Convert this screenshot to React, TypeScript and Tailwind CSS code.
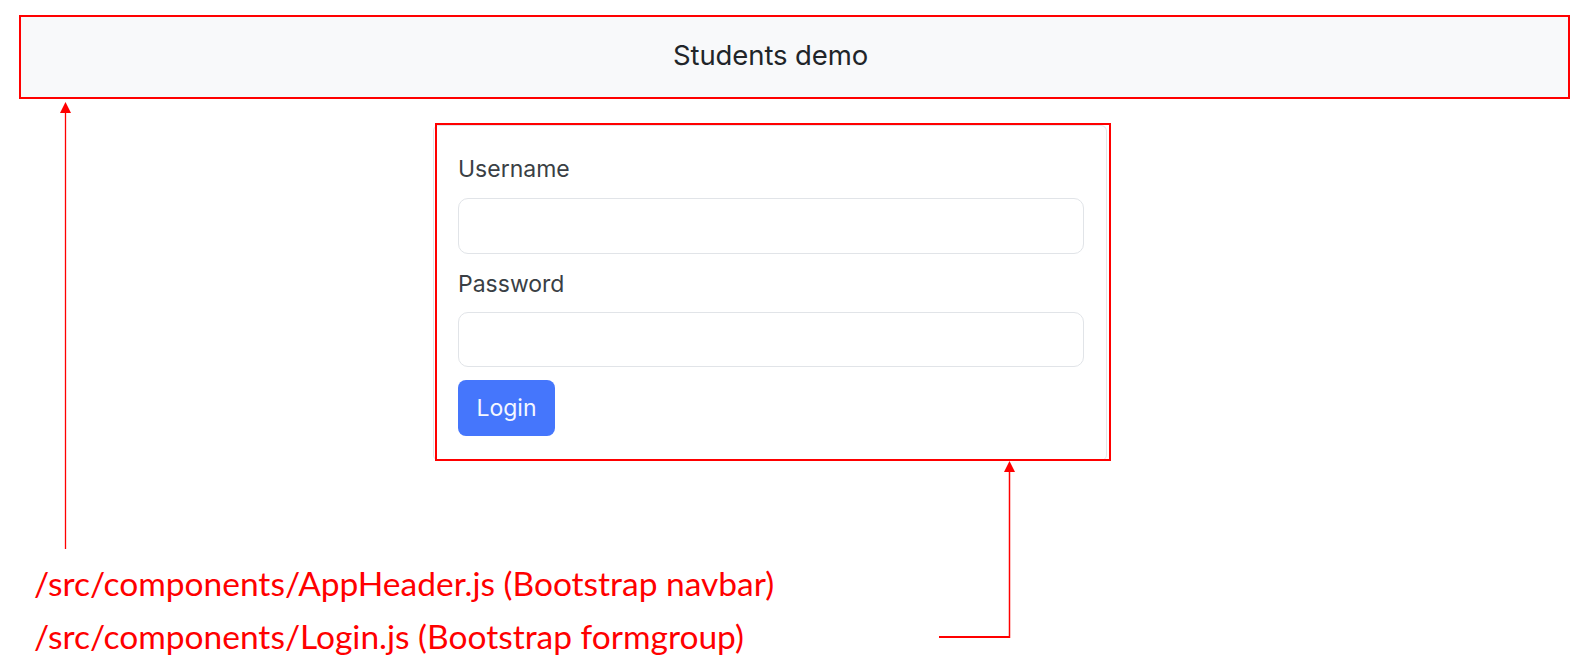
import React from "react";

export default function App() {
  return (
    <div className="relative w-[1582px] h-[657px] bg-white overflow-hidden" style={{ fontFamily: "Inter, 'Liberation Sans', sans-serif" }}>
      {/* Header (navbar) with annotation border */}
      <div className="pt-[15px] pl-[19px] pr-[12px]">
        <div className="h-[84px] border-2 border-[#ff0000] bg-[#f8f9fa] flex items-center pl-[652px] pb-[3px]">
          <span className="text-[27.5px] leading-none text-[#212529] tracking-[-0.1px]">Students demo</span>
        </div>
      </div>

      {/* Login card */}
      <div className="pt-[26px] pl-[433px]">
        <div className="relative w-[674px] h-[336px] rounded-[6px] border border-[#e3e5e8] bg-white px-[24px] pt-[24px]">
          <div className="absolute left-[1px] top-[-3px] w-[676px] h-[338px] border-2 border-[#ff0000]" />
          <div className="flex flex-col">
            <label className="text-[23px] leading-[35px] pt-[2px] text-[#3a3f45] mb-[11px]">Username</label>
            <div className="w-[626px] h-[56px] rounded-[10px] border-[1.5px] border-[#e1e4e8] bg-white" />
            <label className="text-[23px] leading-[35px] pt-[1px] text-[#3a3f45] mt-[12px] mb-[10px]">Password</label>
            <div className="w-[626px] h-[55px] rounded-[10px] border-[1.5px] border-[#e1e4e8] bg-white" />
            <button className="mt-[13px] w-[97px] h-[56px] rounded-[8px] bg-[#4576fc] text-[23px] text-[#f4f7ff] flex items-center justify-center">Login</button>
          </div>
        </div>
      </div>

      {/* Annotation texts */}
      <div className="pt-[96px] pl-[34px] text-[#ff0000] text-[33.5px] leading-[53px]" style={{ fontFamily: "Lato, 'Liberation Sans', sans-serif" }}>
        <div>/src/components/AppHeader.js (Bootstrap navbar)</div>
        <div>/src/components/Login.js (Bootstrap formgroup)</div>
      </div>

      {/* Annotation arrows */}
      <svg className="absolute left-0 top-0 pointer-events-none" width="1582" height="657" viewBox="0 0 1582 657">
        <line x1="65.5" y1="112" x2="65.5" y2="549" stroke="#ff0000" strokeWidth="1.3" />
        <polygon points="60,113 71,113 65.5,102" fill="#ff0000" />
        <line x1="1009.5" y1="471" x2="1009.5" y2="638" stroke="#ff0000" strokeWidth="1.5" />
        <polygon points="1004,472 1015,472 1009.5,461" fill="#ff0000" />
        <line x1="939" y1="637" x2="1010" y2="637" stroke="#ff0000" strokeWidth="2" />
      </svg>
    </div>
  );
}
